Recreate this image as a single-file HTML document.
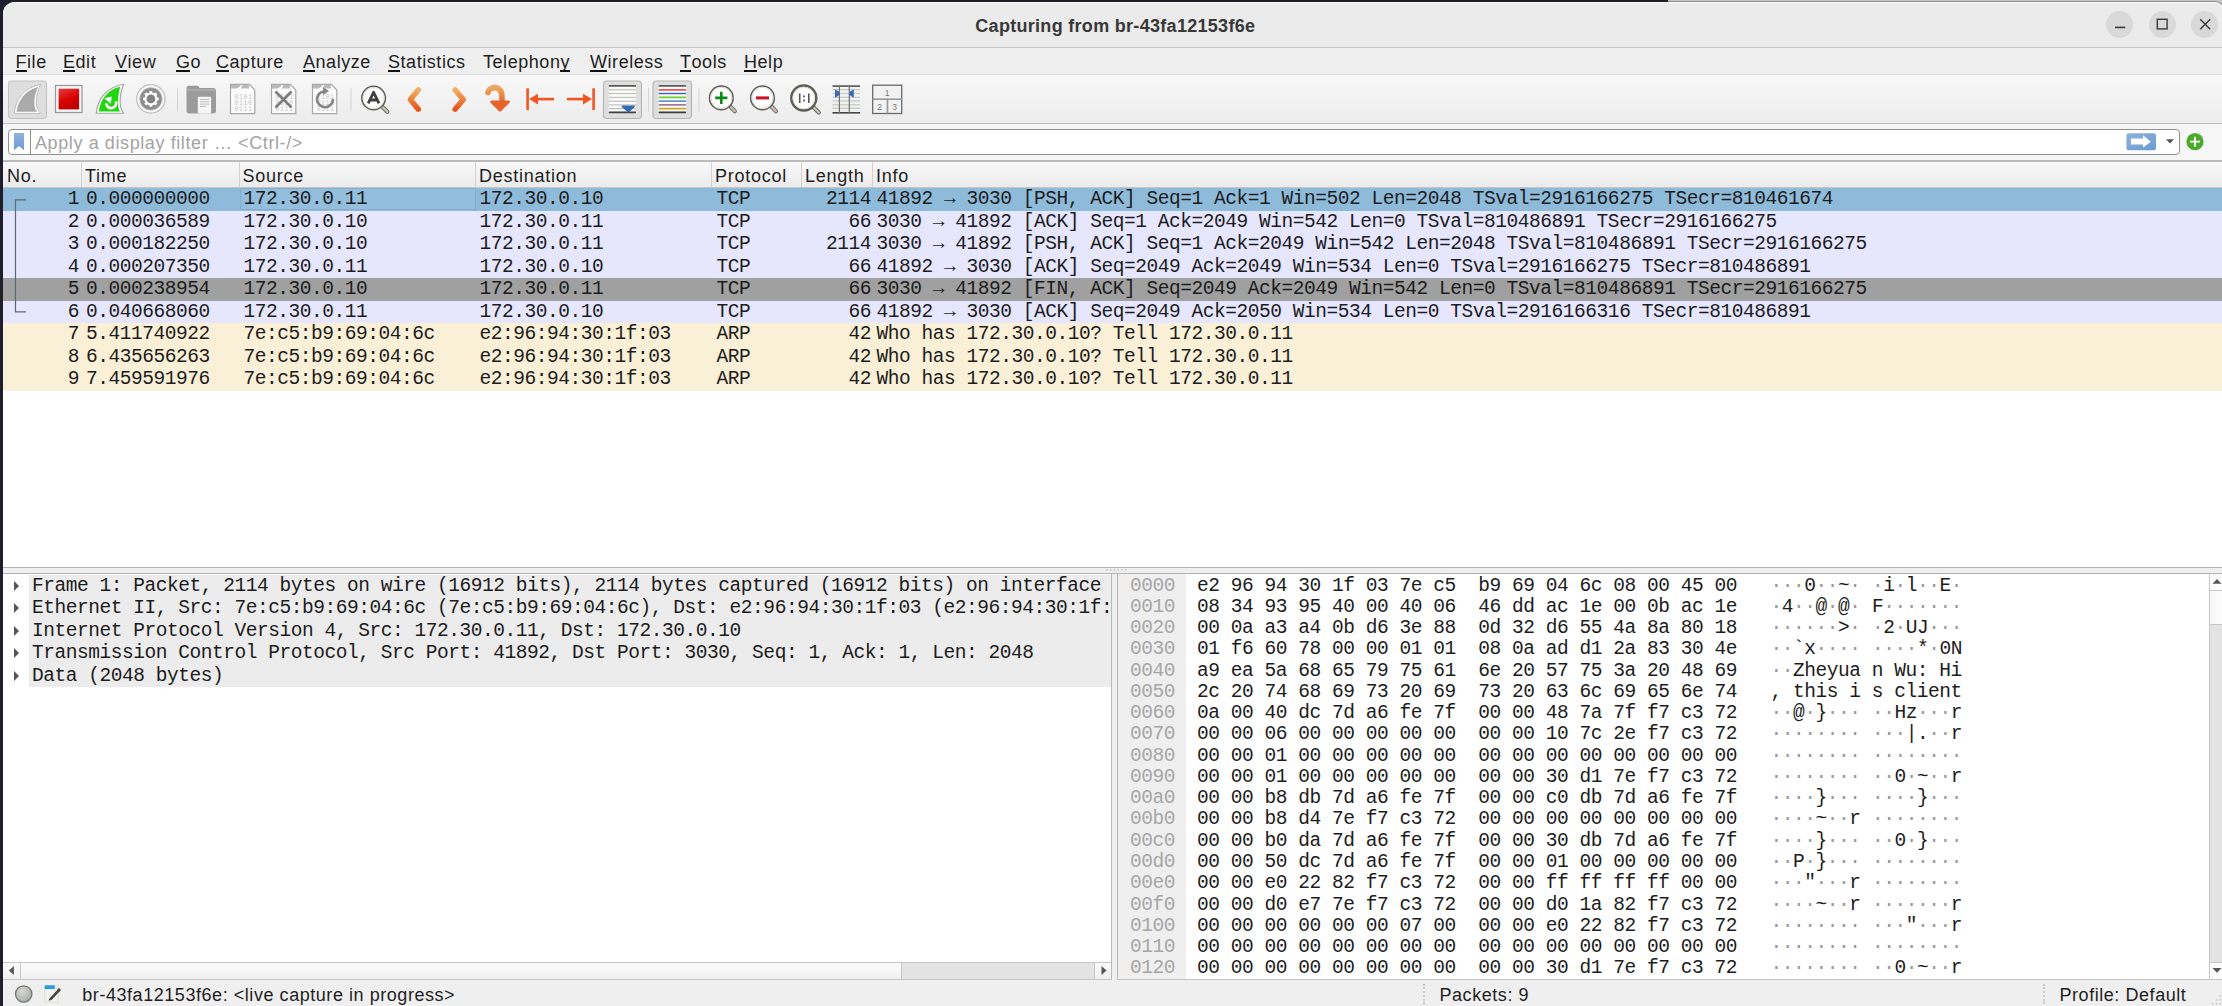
<!DOCTYPE html><html><head><meta charset="utf-8"><style>*{margin:0;padding:0;box-sizing:border-box}
html,body{width:2222px;height:1006px;overflow:hidden;background:#1e1f2b}
body{position:relative;font-family:"Liberation Sans",sans-serif;font-size:18px;letter-spacing:0.55px;color:#1e1e1e}
.a{position:absolute}
.m{position:absolute;font-family:"Liberation Mono",monospace;font-size:19.5px;letter-spacing:-0.45px;white-space:pre;color:#1c1c1c}
#win{position:absolute;left:3px;top:2px;width:2240px;height:1010px;background:#efefef;border-radius:12px 12px 0 0;overflow:hidden}
#topr{position:absolute;left:1668px;top:0;width:554px;height:2px;background:#c6c6c6;border-bottom:1px solid #8e8e8e}
#title{position:absolute;left:3px;top:2px;width:2240px;height:46px;background:#ebebeb;border-top:1px solid #fbfbfb;border-bottom:1px solid #c3c3c3;border-radius:12px 12px 0 0}
#title .t{position:absolute;left:-2.7px;width:2230px;top:12.8px;text-align:center;font-weight:bold;font-size:18px;letter-spacing:0.3px;color:#383838}
.wb{position:absolute;top:7.8px;width:27px;height:27px;border-radius:50%;background:#d9d9d9}
#menu{position:absolute;left:3px;top:48px;width:2240px;height:27px;background:#efefef;border-bottom:1px solid #dedede}
#menu span{position:absolute;top:3.8px}
#menu u{text-decoration:none;position:relative}
#menu u:after{content:"";position:absolute;left:0;right:0.5px;top:17.8px;height:2.4px;background:#111}
#tb{position:absolute;left:3px;top:75px;width:2240px;height:49px;background:linear-gradient(#f8f8f8,#ececec);border-bottom:1px solid #bdbdbd}
#fb{position:absolute;left:3px;top:124px;width:2240px;height:38px;background:#f6f6f6;border-bottom:2px solid #bcbcbc}
#finput{position:absolute;left:8px;top:129.4px;width:2171.5px;height:25.9px;background:#fff;border:1.3px solid #8f8f8f;border-radius:4px}
#finput .sep{position:absolute;left:20.8px;top:0;width:1px;height:24px;background:#8f8f8f}
#finput .ph{position:absolute;left:26px;top:2.3px;color:#a3a3a3;font-size:18px;letter-spacing:0.6px}
#plist{position:absolute;left:3px;top:162px;width:2240px;height:405px;background:#fff}
#hdr{position:absolute;left:3px;top:162px;width:2240px;height:26px;background:linear-gradient(#f9f9f9,#ebebeb);border-bottom:1px solid #c5c5c5}
#hdr span{position:absolute;top:4px;letter-spacing:0.75px}
#hdr i{position:absolute;top:0;width:1px;height:25px;background:#d3d3d3}
.prow{position:absolute;left:3px;width:2240px;height:22.5px;overflow:hidden}
.prow .m{top:0px}
.prow.sel{background:#8fbbdb}
.prow.tcp{background:#e7e6ff}
.prow.fin{background:#a0a0a0}
.prow.arp{background:#faf0d7}
.focus{position:absolute;left:236.8px;top:0.3px;width:236px;height:21.5px;border:1px solid #84aecb;background:#93bedd}
#split{position:absolute;left:3px;top:567px;width:2240px;height:7px;background:#efefef;border-top:1px solid #b3b3b3;border-bottom:1px solid #b3b3b3}
#dpane{position:absolute;left:3px;top:574px;width:1109px;height:406px;background:#fff;border-right:1px solid #b9b9b9;overflow:hidden}
#hpane{position:absolute;left:1117px;top:574px;width:1110px;height:406px;background:#fff;border-left:1px solid #b9b9b9;border-bottom:1px solid #c2c2c2;overflow:hidden}
#offcol{position:absolute;left:1118px;top:574px;width:68px;height:405px;background:#efefef}
.drow{position:absolute;left:3px;width:1108px;height:22.4px;overflow:hidden}
.drow .m{left:29px;top:-0.5px}

.tri{position:absolute;left:10.5px;top:5.5px;width:0;height:0;border-top:5.1px solid transparent;border-bottom:5.1px solid transparent;border-left:5.6px solid #555}
.hrow{position:absolute;left:1118px;width:1090px;height:21.3px}
.hrow .off{left:12px;top:-1px;color:#a6a6a6}
.hrow .hx{left:79px;top:-1px}
.hrow .as{left:652.5px;top:-1px}
#status{position:absolute;left:3px;top:980px;width:2240px;height:26px;background:#efefef}

.as b{font-weight:normal;color:#9a9a9a}
</style></head><body>
<div id="win"></div>
<div id="topr"></div>

<div id="title"><div class="t">Capturing from br-43fa12153f6e</div>
  <div class="wb" style="left:2103px"></div>
  <div class="wb" style="left:2146px"></div>
  <div class="wb" style="left:2188px"></div>
  <svg class="a" style="left:2097px;top:-3px" width="122" height="47" viewBox="0 0 122 47">
    <rect x="15" y="26.6" width="10.2" height="1.6" fill="#3a3a3a"/>
    <rect x="57.3" y="19.3" width="9.8" height="9.6" fill="none" stroke="#3a3a3a" stroke-width="1.4"/>
    <path d="M100.2 19.3 L110.2 29.2 M110.2 19.3 L100.2 29.2" stroke="#3a3a3a" stroke-width="1.4"/>
  </svg>
</div>
<div id="menu">
  <span style="left:12.5px"><u>F</u>ile</span>
  <span style="left:60px"><u>E</u>dit</span>
  <span style="left:112px"><u>V</u>iew</span>
  <span style="left:173px"><u>G</u>o</span>
  <span style="left:213px"><u>C</u>apture</span>
  <span style="left:300px"><u>A</u>nalyze</span>
  <span style="left:385px"><u>S</u>tatistics</span>
  <span style="left:480px">Telephon<u>y</u></span>
  <span style="left:587px"><u>W</u>ireless</span>
  <span style="left:677px"><u>T</u>ools</span>
  <span style="left:741px"><u>H</u>elp</span>
</div>
<div id="tb"></div>
<svg class="a" style="left:0;top:75px" width="920" height="48" viewBox="0 75 920 48">
  <defs>
    <linearGradient id="gred" x1="0.3" y1="0" x2="0.7" y2="1"><stop offset="0" stop-color="#e23434"/><stop offset="0.5" stop-color="#da0000"/><stop offset="1" stop-color="#b80000"/></linearGradient>
    <linearGradient id="gorg" x1="0" y1="0" x2="0" y2="1"><stop offset="0" stop-color="#f2b060"/><stop offset="1" stop-color="#e5541c"/></linearGradient>
    <linearGradient id="gblue" x1="0" y1="0" x2="1" y2="1"><stop offset="0" stop-color="#8db1dc"/><stop offset="1" stop-color="#6c9bd0"/></linearGradient>
  </defs>
  <!-- pressed buttons -->
  <rect x="8.5" y="81" width="38" height="37.5" rx="3.5" fill="#dedede" stroke="#c4c4c4" stroke-width="1.1"/>
  <rect x="603.5" y="81" width="38" height="37.5" rx="3.5" fill="#dedede" stroke="#b4b4b4" stroke-width="1.1"/>
  <rect x="653" y="81" width="38.5" height="37.5" rx="3.5" fill="#dedede" stroke="#b4b4b4" stroke-width="1.1"/>
  <!-- shark fin 1 -->
  <path d="M14.3 113.4 C15.5 99 24 87.5 40.8 84.5 C37 91 36 99 36.5 105.5 C36.8 108.5 38.8 111 40.8 113.4 Z" fill="#ffffff" stroke="#bcbcbc" stroke-width="1"/>
  <path d="M16.6 111.8 C18.2 99.5 25.5 89.8 38 86.9 C34.8 93 34 100 34.5 105.8 C34.7 108.3 35.8 110.3 37.3 111.8 Z" fill="#aaaaaa"/>
  <!-- stop -->
  <rect x="55.5" y="85.5" width="26.5" height="27" fill="#f8f8f8" stroke="#9a9a9a" stroke-width="1.3"/>
  <rect x="58.6" y="88.7" width="20.5" height="20.7" fill="url(#gred)"/>
  <!-- green fin restart -->
  <path d="M96.3 113.3 C97.5 99 106.5 87 123.7 84.3 C120.5 91 119.8 99 120.3 105.5 C120.6 108.5 121.8 111 123.6 113.3 Z" fill="#ffffff" stroke="#a2a2a2" stroke-width="1.1"/>
  <path d="M98.8 111.6 C100.3 99 108 89.5 120.2 86.8 C118.3 93 117.8 100 118.2 105.8 C118.4 108 119 110 120 111.6 Z" fill="#1fd60f"/>
  <path d="M106.2 103.3 A5 5 0 1 0 115.8 101.2" fill="none" stroke="#fff" stroke-width="2.7"/>
  <path d="M104.3 98.2 L111.8 96.6 L110.8 103.8 Z" fill="#fff"/>
  <!-- gear -->
  <circle cx="150.9" cy="98.9" r="14.2" fill="#fafafa" stroke="#bdbdbd" stroke-width="1.2"/>
  <circle cx="150.9" cy="98.9" r="11.3" fill="#8e8e8e" stroke="#d0d0d0" stroke-width="0.6"/>
  <g fill="#fff" transform="translate(150.9 98.9)">
    <circle r="6.4"/>
    <g id="tooth"><rect x="-1.5" y="-7.9" width="3" height="3" rx="0.8"/></g>
    <rect x="-1.5" y="-7.9" width="3" height="3" rx="0.8" transform="rotate(45)"/>
    <rect x="-1.5" y="-7.9" width="3" height="3" rx="0.8" transform="rotate(90)"/>
    <rect x="-1.5" y="-7.9" width="3" height="3" rx="0.8" transform="rotate(135)"/>
    <rect x="-1.5" y="-7.9" width="3" height="3" rx="0.8" transform="rotate(180)"/>
    <rect x="-1.5" y="-7.9" width="3" height="3" rx="0.8" transform="rotate(225)"/>
    <rect x="-1.5" y="-7.9" width="3" height="3" rx="0.8" transform="rotate(270)"/>
    <rect x="-1.5" y="-7.9" width="3" height="3" rx="0.8" transform="rotate(315)"/>
  </g>
  <circle cx="150.9" cy="98.9" r="4.4" fill="#828282"/>
  <!-- separators -->
  <rect x="177" y="88" width="1" height="23.5" fill="#d4d4d4"/>
  <rect x="350.5" y="88" width="1" height="23.5" fill="#d4d4d4"/>
  <rect x="648" y="88" width="1" height="23.5" fill="#d4d4d4"/>
  <rect x="698.5" y="88" width="1" height="23.5" fill="#d4d4d4"/>
  <!-- folder -->
  <path d="M186.5 88 Q186.5 85.8 188.8 85.8 L197 85.8 Q199 85.8 199.5 88 L213 88 Q216 88 216 91 L216 111 Q216 113.4 213.5 113.4 L189 113.4 Q186.5 113.4 186.5 111 Z" fill="#9b9b9b"/>
  <rect x="186.5" y="89.5" width="29.5" height="1" fill="#b8b8b8"/>
  <rect x="197.8" y="96.7" width="13.3" height="16.7" rx="1" fill="#f6f6f6"/>
  <g stroke="#b5b5b5" stroke-width="0.9"><path d="M200 99.5h9M200 101.8h9M200 104.1h9M200 106.4h6"/></g>
  <!-- doc binary -->
  <g id="doc1">
    <path d="M230.5 84.3 L249.5 84.3 L254.8 90 L254.8 113.7 L230.5 113.7 Z" fill="#fbfbfb" stroke="#a8a8a8" stroke-width="1.2"/>
    <path d="M231 84.8 L241 84.8 Q239 88 236.5 88.5 L231 88.5 Z M242.5 84.8 L249 84.8 L249 88.5 L241 88.5 Z" fill="#b9b9b9"/>
    <g font-family="Liberation Mono" font-size="6.6" fill="#c6c6c6"><text x="234.6" y="99">0101</text><text x="234.6" y="104.6">0110</text><text x="234.6" y="110.6">0111</text></g>
  </g>
  <!-- doc X -->
  <path d="M271.5 84.3 L290.5 84.3 L295.8 90 L295.8 113.7 L271.5 113.7 Z" fill="#fbfbfb" stroke="#a8a8a8" stroke-width="1.2"/>
  <path d="M272 84.8 L282 84.8 Q280 88 277.5 88.5 L272 88.5 Z M283.5 84.8 L290 84.8 L290 88.5 L282 88.5 Z" fill="#b9b9b9"/>
  <g font-family="Liberation Mono" font-size="6.6" fill="#c6c6c6"><text x="275.6" y="99">0101</text><text x="275.6" y="104.6">0110</text><text x="275.6" y="110.6">0111</text></g>
  <path d="M275.5 91.5 L291.5 107.5 M291.5 91.5 L275.5 107.5" stroke="#7d7d7d" stroke-width="2.6"/>
  <!-- doc reload -->
  <path d="M312.5 84.3 L331.5 84.3 L336.8 90 L336.8 113.7 L312.5 113.7 Z" fill="#fbfbfb" stroke="#a8a8a8" stroke-width="1.2"/>
  <path d="M313 84.8 L323 84.8 Q321 88 318.5 88.5 L313 88.5 Z M324.5 84.8 L331 84.8 L331 88.5 L323 88.5 Z" fill="#b9b9b9"/>
  <g font-family="Liberation Mono" font-size="6.6" fill="#c6c6c6"><text x="316.6" y="99">0101</text><text x="316.6" y="104.6">0110</text><text x="316.6" y="110.6">0111</text></g>
  <path d="M333 99 A8 8 0 1 1 324.5 91.2" fill="none" stroke="#858585" stroke-width="2.6"/>
  <path d="M323 87 L329 91 L323 95 Z" fill="#858585"/>
  <!-- magnifier A -->
  <path d="M382 106.5 L387.3 111.8" stroke="#6e6e66" stroke-width="4.2" stroke-linecap="round"/><path d="M382 106.5 L387.3 111.8" stroke="#c9c7b6" stroke-width="2.2" stroke-linecap="round"/><circle cx="373.6" cy="98" r="11.8" fill="#fff" stroke="#5c5c5a" stroke-width="1.5"/><circle cx="373.6" cy="98" r="10.55" fill="none" stroke="#dedbc8" stroke-width="1"/>
  <path d="M368.2 103.3 L373.6 92.3 L379 103.3 M370 100 L377.2 100" fill="none" stroke="#3f3f3f" stroke-width="2.8" stroke-linejoin="round"/>
  <!-- prev/next -->
  <path d="M418.3 89.8 L410.3 99.5 L418.3 109.2" fill="none" stroke="url(#gorg)" stroke-width="5.4" stroke-linecap="round" stroke-linejoin="round"/>
  <path d="M455.1 89.8 L463.3 99.5 L455.1 109.2" fill="none" stroke="url(#gorg)" stroke-width="5.4" stroke-linecap="round" stroke-linejoin="round"/>
  <!-- curved jump arrow -->
  <path d="M488 92.5 C489 87 499.5 84.5 501.8 94 L502.2 103" fill="none" stroke="url(#gorg2)" stroke-width="5.6" stroke-linecap="round"/>
  <defs><linearGradient id="gorg2" x1="0" y1="0" x2="0" y2="1"><stop offset="0" stop-color="#eaa862"/><stop offset="1" stop-color="#e06a2c"/></linearGradient></defs>
  <path d="M491.4 101.8 L508.6 101.8 L500 110.3 Z" fill="#e6642a" stroke="#e6642a" stroke-width="2.6" stroke-linejoin="round"/>
  <!-- first/last -->
  <rect x="526.3" y="88.3" width="2.6" height="21.8" fill="#f05522"/>
  <rect x="534" y="97.8" width="20" height="2.6" fill="#f05522"/>
  <path d="M529 99.1 L538 93.8 L538 104.4 Z" fill="#f05522"/>
  <rect x="592.3" y="88.3" width="2.6" height="21.8" fill="#f05522"/>
  <rect x="567" y="97.8" width="20" height="2.6" fill="#f05522"/>
  <path d="M592 99.1 L583 93.8 L583 104.4 Z" fill="#f05522"/>
  <!-- autoscroll lines -->
  <rect x="608.8" y="86.5" width="27.2" height="25" fill="#fbfbfb"/>
  <rect x="608.8" y="85.1" width="27.2" height="1.7" rx="0.6" fill="#5a5c5c"/>
  <g fill="#c3c5bd"><rect x="608.8" y="89.1" width="27.2" height="1.3"/><rect x="608.8" y="92.9" width="27.2" height="1.3"/><rect x="608.8" y="96.8" width="27.2" height="1.3"/><rect x="608.8" y="100.6" width="27.2" height="1.3"/><rect x="608.8" y="104.3" width="27.2" height="1.3"/><rect x="608.8" y="108.0" width="27.2" height="1.3"/></g>
  <rect x="608.8" y="111.6" width="27.2" height="1.6" rx="0.6" fill="#3f4242"/>
  <path d="M622 105.6 Q621 106.2 622.2 107.3 L628.4 112.8 L634.4 107.3 Q635.6 106.2 634.4 105.6 Z" fill="#3468b0"/>
  <!-- colorize lines -->
  <rect x="658.7" y="86.5" width="27.4" height="25" fill="#fbfbfb"/>
  <rect x="658.7" y="85.1" width="27.4" height="1.7" rx="0.6" fill="#5a5c5c"/>
  <rect x="658.7" y="89" width="27.4" height="1.7" rx="0.6" fill="#ee5656"/>
  <rect x="658.7" y="92.8" width="27.4" height="1.5" rx="0.6" fill="#3b6ab4"/>
  <rect x="658.7" y="96.6" width="27.4" height="1.6" rx="0.6" fill="#6ed02a"/>
  <rect x="658.7" y="100.3" width="27.4" height="1.7" rx="0.6" fill="#6a94c8"/>
  <rect x="658.7" y="104.1" width="27.4" height="1.6" rx="0.6" fill="#9a7ca2"/>
  <rect x="658.7" y="107.8" width="27.4" height="1.6" rx="0.6" fill="#d2a818"/>
  <rect x="658.7" y="111.6" width="27.4" height="1.6" rx="0.6" fill="#3a3d3d"/>
  <!-- zoom in -->
  <path d="M730 106.3 L734.8 111.2" stroke="#6e6e66" stroke-width="4.2" stroke-linecap="round"/><path d="M730 106.3 L734.8 111.2" stroke="#c9c7b6" stroke-width="2.2" stroke-linecap="round"/><circle cx="721.3" cy="97.9" r="11.8" fill="#fff" stroke="#5c5c5a" stroke-width="1.5"/><circle cx="721.3" cy="97.9" r="10.55" fill="none" stroke="#dedbc8" stroke-width="1"/>
  <path d="M715.2 97.9 L727.4 97.9 M721.3 91.8 L721.3 104" stroke="#0f8a1a" stroke-width="2.6"/>
  <!-- zoom out -->
  <path d="M771.2 106.3 L776 111.2" stroke="#6e6e66" stroke-width="4.2" stroke-linecap="round"/><path d="M771.2 106.3 L776 111.2" stroke="#c9c7b6" stroke-width="2.2" stroke-linecap="round"/><circle cx="762.5" cy="97.9" r="11.8" fill="#fff" stroke="#5c5c5a" stroke-width="1.5"/><circle cx="762.5" cy="97.9" r="10.55" fill="none" stroke="#dedbc8" stroke-width="1"/>
  <path d="M756 97.9 L769 97.9" stroke="#cc1122" stroke-width="3"/>
  <!-- zoom 1:1 -->
  <path d="M813.2 107 L818.8 112.5" stroke="#6e6e66" stroke-width="4.2" stroke-linecap="round"/><path d="M813.2 107 L818.8 112.5" stroke="#c9c7b6" stroke-width="2.2" stroke-linecap="round"/><circle cx="803.8" cy="98" r="12.5" fill="#fff" stroke="#5c5c5a" stroke-width="2.4"/><circle cx="803.8" cy="98" r="10.8" fill="none" stroke="#dedbc8" stroke-width="1"/>
  <path d="M799.7 93.5 L799.7 103 M808.8 93.5 L808.8 103" stroke="#555" stroke-width="1.6"/>
  <rect x="803.1" y="95.5" width="1.8" height="1.8" fill="#555"/><rect x="803.1" y="99.6" width="1.8" height="1.8" fill="#555"/>
  <!-- resize columns -->
  <g fill="#c9cbc5"><rect x="832.5" y="89" width="27.5" height="1.3"/><rect x="832.5" y="92.8" width="27.5" height="1.3"/><rect x="832.5" y="96.7" width="27.5" height="1.3"/><rect x="832.5" y="100.3" width="27.5" height="1.3"/><rect x="832.5" y="104.1" width="27.5" height="1.3"/><rect x="832.5" y="107.7" width="27.5" height="1.3"/></g>
  <rect x="832.5" y="85.3" width="27.5" height="1.6" fill="#555"/>
  <rect x="832.5" y="112" width="27.5" height="1.6" fill="#444"/>
  <rect x="838.8" y="85.3" width="1.2" height="28" fill="#737470"/>
  <rect x="848.7" y="85.3" width="1.2" height="28" fill="#737470"/>
  <path d="M835 89.4 Q839.8 91.5 839.8 93.5 Q839.8 95.5 835 97.7 Z" fill="#3a6cb6"/>
  <path d="M853.8 89.4 Q849 91.5 849 93.5 Q849 95.5 853.8 97.7 Z" fill="#3a6cb6"/>
  <!-- layout -->
  <rect x="872.7" y="85.2" width="29" height="28.3" fill="#f2f2f2" stroke="#6a6a6a" stroke-width="1.3"/>
  <rect x="872.7" y="98.4" width="29" height="1.6" fill="#9a9a9a"/>
  <rect x="886.6" y="99" width="1.7" height="14.5" fill="#9a9a9a"/>
  <text x="887.3" y="95.5" font-family="Liberation Sans" font-size="8.5" fill="#7a7a7a" text-anchor="middle">1</text>
  <text x="880" y="110" font-family="Liberation Sans" font-size="8.5" fill="#7a7a7a" text-anchor="middle">2</text>
  <text x="894.8" y="110" font-family="Liberation Sans" font-size="8.5" fill="#7a7a7a" text-anchor="middle">3</text>
</svg>
<div id="fb"></div>
<div id="finput"><div class="sep"></div><div class="ph">Apply a display filter … &lt;Ctrl-/&gt;</div></div>
<svg class="a" style="left:0;top:124px" width="2222" height="36" viewBox="0 124 2222 36">
  <path d="M14 133 L24 133 L24 150.2 L19 146 L14 150.2 Z" fill="url(#gblue2)"/>
  <defs><linearGradient id="gblue2" x1="0" y1="0" x2="0" y2="1"><stop offset="0" stop-color="#8fb2dc"/><stop offset="1" stop-color="#6c9bd2"/></linearGradient></defs>
  <rect x="2126.4" y="133.2" width="29.6" height="17" rx="2.2" fill="url(#gblue)"/>
  <path d="M2131 138.5 L2143 138.5 L2143 135.3 L2151 141.7 L2143 147.5 L2143 144.5 L2131 144.5 Z" fill="#fff"/>
  <path d="M2166 139.3 L2174 139.3 L2170 143.6 Z" fill="#555"/>
  <circle cx="2195" cy="141.7" r="8.6" fill="#4aab2a"/>
  <path d="M2190 141.7 L2200 141.7 M2195 136.7 L2195 146.7" stroke="#fff" stroke-width="1.8"/>
</svg>
<div id="plist"></div>
<div id="hdr">
  <span style="left:4px">No.</span><i style="left:78px"></i>
  <span style="left:82px">Time</span><i style="left:236px"></i>
  <span style="left:239.5px">Source</span><i style="left:472px"></i>
  <span style="left:476px">Destination</span><i style="left:708px"></i>
  <span style="left:712px">Protocol</span><i style="left:798px"></i>
  <span style="left:802px">Length</span><i style="left:869px"></i>
  <span style="left:873px">Info</span>
</div>

<div id="split"></div>
<div id="dpane"></div>
<div id="hpane"></div>
<div id="offcol"></div>
<div id="status">
  <span class="a" style="left:79.3px;top:5.3px">br-43fa12153f6e: &lt;live capture in progress&gt;</span>
  <span class="a" style="left:1436.5px;top:5.3px">Packets: 9</span>
  <span class="a" style="left:2056.5px;top:5.3px">Profile: Default</span>
</div>

<div class="prow sel" style="top:188.0px">
<div class="focus"></div>
<span class="m" style="left:0;width:76px;text-align:right">1</span>
<span class="m" style="left:83px">0.000000000</span>
<span class="m" style="left:240.5px">172.30.0.11</span>
<span class="m" style="left:476.5px">172.30.0.10</span>
<span class="m" style="left:713.5px">TCP</span>
<span class="m" style="left:700px;width:168px;text-align:right">2114</span>
<span class="m" style="left:873.5px">41892 → 3030 [PSH, ACK] Seq=1 Ack=1 Win=502 Len=2048 TSval=2916166275 TSecr=810461674</span>
</div>
<div class="prow tcp" style="top:210.5px">
<span class="m" style="left:0;width:76px;text-align:right">2</span>
<span class="m" style="left:83px">0.000036589</span>
<span class="m" style="left:240.5px">172.30.0.10</span>
<span class="m" style="left:476.5px">172.30.0.11</span>
<span class="m" style="left:713.5px">TCP</span>
<span class="m" style="left:700px;width:168px;text-align:right">66</span>
<span class="m" style="left:873.5px">3030 → 41892 [ACK] Seq=1 Ack=2049 Win=542 Len=0 TSval=810486891 TSecr=2916166275</span>
</div>
<div class="prow tcp" style="top:233.0px">
<span class="m" style="left:0;width:76px;text-align:right">3</span>
<span class="m" style="left:83px">0.000182250</span>
<span class="m" style="left:240.5px">172.30.0.10</span>
<span class="m" style="left:476.5px">172.30.0.11</span>
<span class="m" style="left:713.5px">TCP</span>
<span class="m" style="left:700px;width:168px;text-align:right">2114</span>
<span class="m" style="left:873.5px">3030 → 41892 [PSH, ACK] Seq=1 Ack=2049 Win=542 Len=2048 TSval=810486891 TSecr=2916166275</span>
</div>
<div class="prow tcp" style="top:255.5px">
<span class="m" style="left:0;width:76px;text-align:right">4</span>
<span class="m" style="left:83px">0.000207350</span>
<span class="m" style="left:240.5px">172.30.0.11</span>
<span class="m" style="left:476.5px">172.30.0.10</span>
<span class="m" style="left:713.5px">TCP</span>
<span class="m" style="left:700px;width:168px;text-align:right">66</span>
<span class="m" style="left:873.5px">41892 → 3030 [ACK] Seq=2049 Ack=2049 Win=534 Len=0 TSval=2916166275 TSecr=810486891</span>
</div>
<div class="prow fin" style="top:278.0px">
<span class="m" style="left:0;width:76px;text-align:right">5</span>
<span class="m" style="left:83px">0.000238954</span>
<span class="m" style="left:240.5px">172.30.0.10</span>
<span class="m" style="left:476.5px">172.30.0.11</span>
<span class="m" style="left:713.5px">TCP</span>
<span class="m" style="left:700px;width:168px;text-align:right">66</span>
<span class="m" style="left:873.5px">3030 → 41892 [FIN, ACK] Seq=2049 Ack=2049 Win=542 Len=0 TSval=810486891 TSecr=2916166275</span>
</div>
<div class="prow tcp" style="top:300.5px">
<span class="m" style="left:0;width:76px;text-align:right">6</span>
<span class="m" style="left:83px">0.040668060</span>
<span class="m" style="left:240.5px">172.30.0.11</span>
<span class="m" style="left:476.5px">172.30.0.10</span>
<span class="m" style="left:713.5px">TCP</span>
<span class="m" style="left:700px;width:168px;text-align:right">66</span>
<span class="m" style="left:873.5px">41892 → 3030 [ACK] Seq=2049 Ack=2050 Win=534 Len=0 TSval=2916166316 TSecr=810486891</span>
</div>
<div class="prow arp" style="top:323.0px">
<span class="m" style="left:0;width:76px;text-align:right">7</span>
<span class="m" style="left:83px">5.411740922</span>
<span class="m" style="left:240.5px">7e:c5:b9:69:04:6c</span>
<span class="m" style="left:476.5px">e2:96:94:30:1f:03</span>
<span class="m" style="left:713.5px">ARP</span>
<span class="m" style="left:700px;width:168px;text-align:right">42</span>
<span class="m" style="left:873.5px">Who has 172.30.0.10? Tell 172.30.0.11</span>
</div>
<div class="prow arp" style="top:345.5px">
<span class="m" style="left:0;width:76px;text-align:right">8</span>
<span class="m" style="left:83px">6.435656263</span>
<span class="m" style="left:240.5px">7e:c5:b9:69:04:6c</span>
<span class="m" style="left:476.5px">e2:96:94:30:1f:03</span>
<span class="m" style="left:713.5px">ARP</span>
<span class="m" style="left:700px;width:168px;text-align:right">42</span>
<span class="m" style="left:873.5px">Who has 172.30.0.10? Tell 172.30.0.11</span>
</div>
<div class="prow arp" style="top:368.0px">
<span class="m" style="left:0;width:76px;text-align:right">9</span>
<span class="m" style="left:83px">7.459591976</span>
<span class="m" style="left:240.5px">7e:c5:b9:69:04:6c</span>
<span class="m" style="left:476.5px">e2:96:94:30:1f:03</span>
<span class="m" style="left:713.5px">ARP</span>
<span class="m" style="left:700px;width:168px;text-align:right">42</span>
<span class="m" style="left:873.5px">Who has 172.30.0.10? Tell 172.30.0.11</span>
</div>
<div class="a" style="left:29px;top:575px;width:1082px;height:111.8px;background:#ececec"></div>
<div class="drow" style="top:575.0px"><div class="tri"></div><span class="m">Frame 1: Packet, 2114 bytes on wire (16912 bits), 2114 bytes captured (16912 bits) on interface br-43fa12153f6e, id 0</span></div>
<div class="drow" style="top:597.55px"><div class="tri"></div><span class="m">Ethernet II, Src: 7e:c5:b9:69:04:6c (7e:c5:b9:69:04:6c), Dst: e2:96:94:30:1f:03 (e2:96:94:30:1f:03)</span></div>
<div class="drow" style="top:620.1px"><div class="tri"></div><span class="m">Internet Protocol Version 4, Src: 172.30.0.11, Dst: 172.30.0.10</span></div>
<div class="drow" style="top:642.65px"><div class="tri"></div><span class="m">Transmission Control Protocol, Src Port: 41892, Dst Port: 3030, Seq: 1, Ack: 1, Len: 2048</span></div>
<div class="drow" style="top:665.2px"><div class="tri"></div><span class="m">Data (2048 bytes)</span></div>
<div class="hrow" style="top:575.5px"><span class="m off">0000</span><span class="m hx">e2 96 94 30 1f 03 7e c5  b9 69 04 6c 08 00 45 00</span><span class="m as"><b>·</b><b>·</b><b>·</b>0<b>·</b><b>·</b>~<b>·</b> <b>·</b>i<b>·</b>l<b>·</b><b>·</b>E<b>·</b></span></div>
<div class="hrow" style="top:596.77px"><span class="m off">0010</span><span class="m hx">08 34 93 95 40 00 40 06  46 dd ac 1e 00 0b ac 1e</span><span class="m as"><b>·</b>4<b>·</b><b>·</b>@<b>·</b>@<b>·</b> F<b>·</b><b>·</b><b>·</b><b>·</b><b>·</b><b>·</b><b>·</b></span></div>
<div class="hrow" style="top:618.04px"><span class="m off">0020</span><span class="m hx">00 0a a3 a4 0b d6 3e 88  0d 32 d6 55 4a 8a 80 18</span><span class="m as"><b>·</b><b>·</b><b>·</b><b>·</b><b>·</b><b>·</b>&gt;<b>·</b> <b>·</b>2<b>·</b>UJ<b>·</b><b>·</b><b>·</b></span></div>
<div class="hrow" style="top:639.31px"><span class="m off">0030</span><span class="m hx">01 f6 60 78 00 00 01 01  08 0a ad d1 2a 83 30 4e</span><span class="m as"><b>·</b><b>·</b>`x<b>·</b><b>·</b><b>·</b><b>·</b> <b>·</b><b>·</b><b>·</b><b>·</b>*<b>·</b>0N</span></div>
<div class="hrow" style="top:660.58px"><span class="m off">0040</span><span class="m hx">a9 ea 5a 68 65 79 75 61  6e 20 57 75 3a 20 48 69</span><span class="m as"><b>·</b><b>·</b>Zheyua n Wu: Hi</span></div>
<div class="hrow" style="top:681.85px"><span class="m off">0050</span><span class="m hx">2c 20 74 68 69 73 20 69  73 20 63 6c 69 65 6e 74</span><span class="m as">, this i s client</span></div>
<div class="hrow" style="top:703.12px"><span class="m off">0060</span><span class="m hx">0a 00 40 dc 7d a6 fe 7f  00 00 48 7a 7f f7 c3 72</span><span class="m as"><b>·</b><b>·</b>@<b>·</b>}<b>·</b><b>·</b><b>·</b> <b>·</b><b>·</b>Hz<b>·</b><b>·</b><b>·</b>r</span></div>
<div class="hrow" style="top:724.39px"><span class="m off">0070</span><span class="m hx">00 00 06 00 00 00 00 00  00 00 10 7c 2e f7 c3 72</span><span class="m as"><b>·</b><b>·</b><b>·</b><b>·</b><b>·</b><b>·</b><b>·</b><b>·</b> <b>·</b><b>·</b><b>·</b>|.<b>·</b><b>·</b>r</span></div>
<div class="hrow" style="top:745.66px"><span class="m off">0080</span><span class="m hx">00 00 01 00 00 00 00 00  00 00 00 00 00 00 00 00</span><span class="m as"><b>·</b><b>·</b><b>·</b><b>·</b><b>·</b><b>·</b><b>·</b><b>·</b> <b>·</b><b>·</b><b>·</b><b>·</b><b>·</b><b>·</b><b>·</b><b>·</b></span></div>
<div class="hrow" style="top:766.9300000000001px"><span class="m off">0090</span><span class="m hx">00 00 01 00 00 00 00 00  00 00 30 d1 7e f7 c3 72</span><span class="m as"><b>·</b><b>·</b><b>·</b><b>·</b><b>·</b><b>·</b><b>·</b><b>·</b> <b>·</b><b>·</b>0<b>·</b>~<b>·</b><b>·</b>r</span></div>
<div class="hrow" style="top:788.2px"><span class="m off">00a0</span><span class="m hx">00 00 b8 db 7d a6 fe 7f  00 00 c0 db 7d a6 fe 7f</span><span class="m as"><b>·</b><b>·</b><b>·</b><b>·</b>}<b>·</b><b>·</b><b>·</b> <b>·</b><b>·</b><b>·</b><b>·</b>}<b>·</b><b>·</b><b>·</b></span></div>
<div class="hrow" style="top:809.47px"><span class="m off">00b0</span><span class="m hx">00 00 b8 d4 7e f7 c3 72  00 00 00 00 00 00 00 00</span><span class="m as"><b>·</b><b>·</b><b>·</b><b>·</b>~<b>·</b><b>·</b>r <b>·</b><b>·</b><b>·</b><b>·</b><b>·</b><b>·</b><b>·</b><b>·</b></span></div>
<div class="hrow" style="top:830.74px"><span class="m off">00c0</span><span class="m hx">00 00 b0 da 7d a6 fe 7f  00 00 30 db 7d a6 fe 7f</span><span class="m as"><b>·</b><b>·</b><b>·</b><b>·</b>}<b>·</b><b>·</b><b>·</b> <b>·</b><b>·</b>0<b>·</b>}<b>·</b><b>·</b><b>·</b></span></div>
<div class="hrow" style="top:852.01px"><span class="m off">00d0</span><span class="m hx">00 00 50 dc 7d a6 fe 7f  00 00 01 00 00 00 00 00</span><span class="m as"><b>·</b><b>·</b>P<b>·</b>}<b>·</b><b>·</b><b>·</b> <b>·</b><b>·</b><b>·</b><b>·</b><b>·</b><b>·</b><b>·</b><b>·</b></span></div>
<div class="hrow" style="top:873.28px"><span class="m off">00e0</span><span class="m hx">00 00 e0 22 82 f7 c3 72  00 00 ff ff ff ff 00 00</span><span class="m as"><b>·</b><b>·</b><b>·</b>"<b>·</b><b>·</b><b>·</b>r <b>·</b><b>·</b><b>·</b><b>·</b><b>·</b><b>·</b><b>·</b><b>·</b></span></div>
<div class="hrow" style="top:894.55px"><span class="m off">00f0</span><span class="m hx">00 00 d0 e7 7e f7 c3 72  00 00 d0 1a 82 f7 c3 72</span><span class="m as"><b>·</b><b>·</b><b>·</b><b>·</b>~<b>·</b><b>·</b>r <b>·</b><b>·</b><b>·</b><b>·</b><b>·</b><b>·</b><b>·</b>r</span></div>
<div class="hrow" style="top:915.8199999999999px"><span class="m off">0100</span><span class="m hx">00 00 00 00 00 00 07 00  00 00 e0 22 82 f7 c3 72</span><span class="m as"><b>·</b><b>·</b><b>·</b><b>·</b><b>·</b><b>·</b><b>·</b><b>·</b> <b>·</b><b>·</b><b>·</b>"<b>·</b><b>·</b><b>·</b>r</span></div>
<div class="hrow" style="top:937.0899999999999px"><span class="m off">0110</span><span class="m hx">00 00 00 00 00 00 00 00  00 00 00 00 00 00 00 00</span><span class="m as"><b>·</b><b>·</b><b>·</b><b>·</b><b>·</b><b>·</b><b>·</b><b>·</b> <b>·</b><b>·</b><b>·</b><b>·</b><b>·</b><b>·</b><b>·</b><b>·</b></span></div>
<div class="hrow" style="top:958.36px"><span class="m off">0120</span><span class="m hx">00 00 00 00 00 00 00 00  00 00 30 d1 7e f7 c3 72</span><span class="m as"><b>·</b><b>·</b><b>·</b><b>·</b><b>·</b><b>·</b><b>·</b><b>·</b> <b>·</b><b>·</b>0<b>·</b>~<b>·</b><b>·</b>r</span></div>
<svg class="a" style="left:0;top:188px" width="40" height="135" viewBox="0 188 40 135">
  <path d="M26 199.8 L15.5 199.8 L15.5 311.8 L26 311.8" fill="none" stroke="#5a6a70" stroke-width="1.2"/>
</svg>
<!-- details h scrollbar -->
<div class="a" style="left:3px;top:962px;width:1108px;height:18px;background:linear-gradient(#fbfbfb,#f0f0f0);border-top:1px solid #c6c6c6;border-bottom:1px solid #c6c6c6"></div>
<div class="a" style="left:20px;top:963px;width:1px;height:16px;background:#c6c6c6"></div>
<div class="a" style="left:901px;top:963px;width:193px;height:16px;background:#e3e3e3;border-left:1px solid #c6c6c6"></div>
<div class="a" style="left:1094px;top:963px;width:17px;height:16px;background:linear-gradient(#fbfbfb,#f0f0f0);border-left:1px solid #c6c6c6"></div>
<svg class="a" style="left:0;top:962px" width="1111" height="18" viewBox="0 962 1111 18"><path d="M13.9 965.9 L8.9 970.5 L13.9 975 Z" fill="#555"/><path d="M1101.5 965.9 L1106.5 970.5 L1101.5 975 Z" fill="#555"/></svg>
<!-- hex v scrollbar -->
<div class="a" style="left:2209px;top:574px;width:13px;height:406px;background:#e3e3e3;border-left:1px solid #c6c6c6"></div>
<div class="a" style="left:2210px;top:574px;width:12px;height:17px;background:#fbfbfb;border-bottom:1px solid #c6c6c6"></div>
<div class="a" style="left:2210px;top:591px;width:12px;height:34px;background:linear-gradient(90deg,#f6f6f6,#fdfdfd);border-bottom:1px solid #c6c6c6"></div>
<div class="a" style="left:2210px;top:962px;width:12px;height:18px;background:#fbfbfb;border-top:1px solid #c6c6c6;border-bottom:1px solid #c6c6c6"></div>
<svg class="a" style="left:2200px;top:570px" width="22" height="410" viewBox="2200 570 22 410"><path d="M2212.5 583.8 L2217 579 L2221.5 583.8 Z" fill="#555"/><path d="M2212.5 968 L2217 972.7 L2221.5 968 Z" fill="#555"/></svg>
<!-- status icons -->
<svg class="a" style="left:0;top:980px" width="80" height="26" viewBox="0 980 80 26">
  <defs><radialGradient id="gcirc" cx="0.4" cy="0.35" r="0.7"><stop offset="0" stop-color="#d6d8d4"/><stop offset="1" stop-color="#a9aba7"/></radialGradient></defs>
  <circle cx="23.7" cy="994" r="8.2" fill="url(#gcirc)" stroke="#777" stroke-width="1.3"/>
  <rect x="44.8" y="985.5" width="13.5" height="16.5" fill="#f2f2ee" stroke="#d8d8d0" stroke-width="0.8"/>
  <rect x="44.8" y="985.3" width="10" height="3.8" fill="#2a9ad8"/>
  <path d="M49.5 998.5 L59 988 L61 990 L51.5 1000 L48.5 1000.8 Z" fill="#444"/>
</svg>
<div class="a" style="left:1423px;top:984px;width:2px;height:20px;border-left:2px dotted #c8c8c8"></div>
<div class="a" style="left:2043px;top:984px;width:2px;height:20px;border-left:2px dotted #c8c8c8"></div>
<svg class="a" style="left:1100px;top:566px" width="40" height="8" viewBox="1100 566 40 8"><g fill="#b0b0b0"><rect x="1106.3" y="569.3" width="1.3" height="1.3"/><rect x="1110" y="569.3" width="1.3" height="1.3"/><rect x="1113.8" y="569.3" width="1.3" height="1.3"/><rect x="1117.5" y="569.3" width="1.3" height="1.3"/><rect x="1121.3" y="569.3" width="1.3" height="1.3"/><rect x="1125" y="569.3" width="1.3" height="1.3"/></g></svg>
<svg class="a" style="left:2200px;top:985px" width="22" height="21" viewBox="2200 985 22 21"><g fill="#bdbdbd"><rect x="2219.5" y="995.5" width="1.4" height="1.4"/><rect x="2215.8" y="999.3" width="1.4" height="1.4"/><rect x="2219.5" y="999.3" width="1.4" height="1.4"/><rect x="2212" y="1003" width="1.4" height="1.4"/><rect x="2215.8" y="1003" width="1.4" height="1.4"/><rect x="2219.5" y="1003" width="1.4" height="1.4"/></g></svg>
<svg class="a" style="left:2200px;top:0" width="22" height="22" viewBox="2200 0 22 22"><path d="M2215.3 1.3 Q2219 1.6 2222 4.3 L2222 0 L2215.3 0Z" fill="#c6c6c6"/><path d="M2200 1.5 L2215 1.5 Q2219 1.8 2222 4.6" fill="none" stroke="#8e8e8e" stroke-width="1.1"/><path d="M2200 2.5 L2215 2.5 Q2218.5 2.8 2221.6 5.6" fill="none" stroke="#fbfbfb" stroke-width="1"/></svg>

</body></html>
